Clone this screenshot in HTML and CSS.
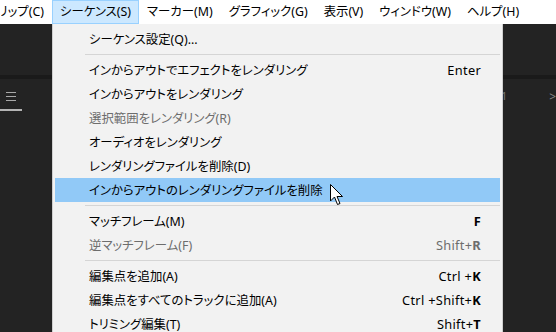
FILE: index.html
```html
<!DOCTYPE html>
<html lang="ja">
<head>
    <meta charset="utf-8">
    <title>シーケンス メニュー</title>
    <link rel="stylesheet" href="styles.css">
</head>
<body>
    <div class="menubar">
        <div class="menubar-item cut"><span>クリップ(C)</span></div>
        <div class="menubar-item open">シーケンス(S)</div>
        <div class="menubar-item">マーカー(M)</div>
        <div class="menubar-item">グラフィック(G)</div>
        <div class="menubar-item">表示(V)</div>
        <div class="menubar-item">ウィンドウ(W)</div>
        <div class="menubar-item">ヘルプ(H)</div>
    </div>

    <div class="workspace">
        <div class="panel-top"></div>
        <div class="panel-divider"></div>
        <div class="panel-head">
            <div class="tab">
                <span class="hamburger"><i></i><i></i><i></i></span>
                <span class="tab-line"></span>
            </div>
            <span class="tab-mark">1</span>
            <span class="tab-arrow">&gt;</span>
        </div>
    </div>

    <div class="dropdown">
        <div class="menu-item">シーケンス設定(Q)...</div>
        <div class="separator"></div>
        <div class="menu-item">インからアウトでエフェクトをレンダリング<span class="key">Enter</span></div>
        <div class="menu-item">インからアウトをレンダリング</div>
        <div class="menu-item disabled">選択範囲をレンダリング(R)</div>
        <div class="menu-item">オーディオをレンダリング</div>
        <div class="menu-item">レンダリングファイルを削除(D)</div>
        <div class="menu-item hover">インからアウトのレンダリングファイルを削除</div>
        <div class="separator"></div>
        <div class="menu-item">マッチフレーム(M)<span class="key"><b>F</b></span></div>
        <div class="menu-item disabled">逆マッチフレーム(F)<span class="key">Shift+<b>R</b></span></div>
        <div class="separator"></div>
        <div class="menu-item">編集点を追加(A)<span class="key">Ctrl +<b>K</b></span></div>
        <div class="menu-item">編集点をすべてのトラックに追加(A)<span class="key">Ctrl +Shift+<b>K</b></span></div>
        <div class="menu-item">トリミング編集(T)<span class="key">Shift+<b>T</b></span></div>
    </div>

    <svg class="cursor" width="14" height="22" viewBox="0 0 14 22">
        <path d="M0.5 0.5 L0.5 17 L4.5 13 L7.5 20.5 L10 19.5 L7 12.5 L12.5 12.5 Z" fill="#fff" stroke="#000" stroke-width="1"/>
    </svg>
</body>
</html>
```

FILE: styles.css
```css
html, body {
    margin: 0;
    height: 100%;
    overflow: hidden;
}

body {
    background-color: #232323;
    font-family: "Noto Sans", "Noto Sans CJK JP", sans-serif;
    font-size: 12.4px;
    font-feature-settings: "palt";
    color: #000;
    display: flex;
    flex-direction: column;
}

.menubar {
    display: flex;
    height: 24px;
    background-color: #fff;
}

.menubar-item {
    box-sizing: border-box;
    height: 24px;
    line-height: 22px;
    padding: 0 7px;
    border: 1px solid transparent;
    white-space: nowrap;
}

.menubar-item.cut {
    width: 52px;
    display: flex;
    justify-content: flex-end;
    overflow: hidden;
}

.menubar-item.open {
    background-color: #cce8ff;
    border-color: #99d1ff;
}

.workspace {
    flex: 1;
    display: flex;
    flex-direction: column;
}

.panel-top {
    height: 51px;
}

.panel-divider {
    height: 4px;
    background-color: #1a1a1a;
}

.panel-head {
    display: flex;
    align-items: flex-start;
    padding-top: 13px;
}

.tab {
    width: 22px;
    display: flex;
    flex-direction: column;
    align-items: center;
}

.hamburger {
    display: flex;
    flex-direction: column;
    gap: 3px;
    width: 10px;
}

.hamburger i {
    display: block;
    height: 1px;
    background-color: #a8a8a8;
}

.tab-line {
    width: 22px;
    height: 2px;
    margin-top: 8px;
    background-color: #b4b4b4;
}

.tab-mark {
    margin-left: 479px;
    margin-top: -4px;
    font-size: 11px;
    color: #777;
}

.tab-arrow {
    margin-left: 42px;
    margin-top: -4px;
    font-size: 12px;
    color: #888;
}

.dropdown {
    position: absolute;
    left: 52px;
    top: 24px;
    bottom: 0;
    width: 451px;
    box-sizing: border-box;
    padding: 3px 2px 0 2px;
    background-color: #f2f2f2;
    border-left: 1px solid #cfcfcf;
    border-right: 1px solid #cfcfcf;
}

.menu-item {
    display: flex;
    align-items: center;
    height: 24px;
    padding: 0 19px 0 34px;
    white-space: nowrap;
}

.menu-item.disabled {
    color: #6d6d6d;
}

.menu-item.hover {
    background-color: #91c9f7;
}

.key {
    margin-left: auto;
    font-size: 12.8px;
    letter-spacing: 0.3px;
}

.key b {
    font-weight: 700;
}

.separator {
    height: 1px;
    margin: 3px 0 3px 30px;
    background-color: #d5d5d5;
}

.cursor {
    position: absolute;
    left: 330px;
    top: 184px;
}
```
